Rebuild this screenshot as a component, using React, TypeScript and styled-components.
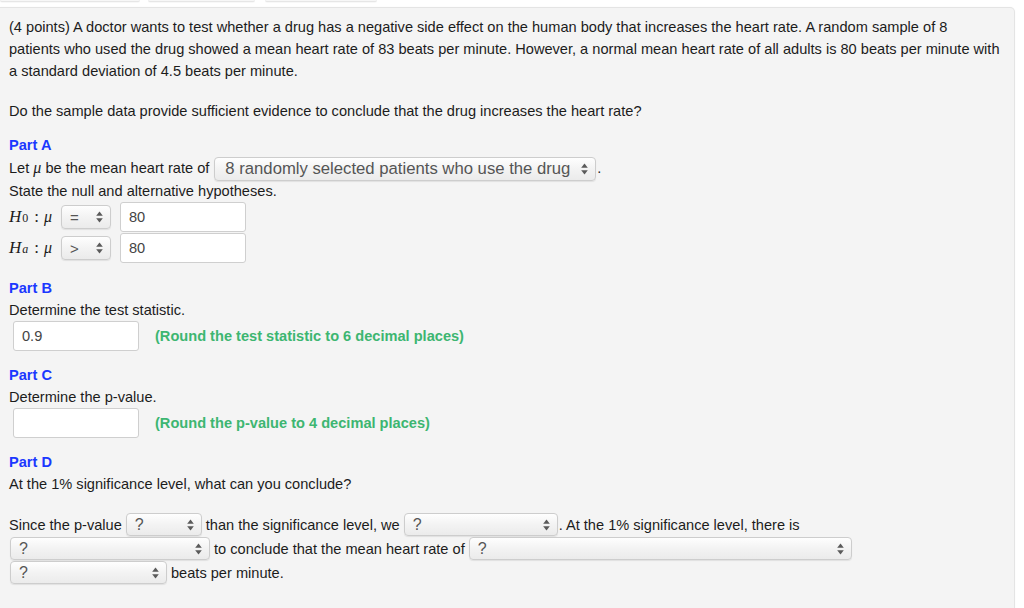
import React from 'react';
import styled, { createGlobalStyle } from 'styled-components';

const Global = createGlobalStyle`
  html, body { margin: 0; padding: 0; background: #ffffff; }
  body {
    font-family: "Liberation Sans", Arial, Helvetica, sans-serif;
    font-size: 14.6px;
    color: #1c1c1c;
  }
`;

const Page = styled.div`
  width: 1024px;
  height: 608px;
  overflow: hidden;
  background: #ffffff;
`;

const TabBar = styled.div`
  display: flex;
  height: 7px;
  align-items: flex-start;
`;

const Tab = styled.div<{ $w: number; $ml: number }>`
  width: ${p => p.$w}px;
  margin-left: ${p => p.$ml}px;
  height: 1px;
  background: #f7f7f7;
  border-bottom: 1px solid #e6e6e6;
  border-radius: 0 0 3px 3px;
  box-shadow: 0 1px 1px rgba(0, 0, 0, 0.03);
`;

const Panel = styled.div`
  box-sizing: border-box;
  width: 1015px;
  min-height: 640px;
  background: #f4f4f4;
  border: 1px solid #e4e4e4;
  border-left: none;
  border-radius: 0 5px 0 0;
  padding: 8px 10px 0 9px;
  box-shadow: 0 0 2px rgba(0, 0, 0, 0.04);
`;

const Para = styled.div<{ $mt?: number }>`
  line-height: 22px;
  margin-top: ${p => p.$mt ?? 0}px;
`;

const PartTitle = styled.div<{ $mt: number }>`
  margin-top: ${p => p.$mt}px;
  line-height: 22px;
  font-weight: bold;
  color: #1b38ff;
`;

const SelectLine = styled.div`
  line-height: 23.5px;
  height: 23.5px;
  white-space: nowrap;
`;

const MathVar = styled.span<{ $size?: number }>`
  font-family: "Liberation Serif", "Times New Roman", serif;
  font-style: italic;
  font-size: ${p => p.$size ?? 16}px;
`;

const MathSub = styled.sub`
  font-family: "Liberation Serif", "Times New Roman", serif;
  font-style: normal;
  font-size: 12px;
  vertical-align: -3px;
  margin-left: 1px;
`;

const MathColon = styled.span`
  font-family: "Liberation Serif", "Times New Roman", serif;
  font-size: 17px;
  margin: 0 5px 0 6px;
`;

const HypRow = styled.div`
  display: flex;
  align-items: center;
  height: 31px;
`;

const HypLabel = styled.span`
  display: inline-flex;
  align-items: baseline;
  width: 48px;
`;

const Box = styled.span<{ $w: number; $h: number; $fs: number; $pl: number }>`
  display: inline-flex;
  box-sizing: border-box;
  align-items: center;
  justify-content: space-between;
  vertical-align: middle;
  flex: none;
  width: ${p => p.$w}px;
  height: ${p => p.$h}px;
  padding: 0 7px 0 ${p => p.$pl}px;
  border: 1px solid #cdcdcd;
  border-radius: 4px;
  background: linear-gradient(#fefefe 0%, #f3f3f3 50%, #ebebeb 100%);
  box-shadow: 0 1px 1px rgba(0, 0, 0, 0.08);
  font-family: "Liberation Sans", Arial, Helvetica, sans-serif;
  font-size: ${p => p.$fs}px;
  color: #555555;
  line-height: 1;
  margin: 0 4px;
`;

const BoxText = styled.span`
  white-space: nowrap;
`;

const Arrows = () => (
  <svg width="7" height="12" viewBox="0 0 7 12">
    <polygon points="3.5,0.5 6.8,4.8 0.2,4.8" fill="#5a5a5a" />
    <polygon points="0.2,7.2 6.8,7.2 3.5,11.5" fill="#5a5a5a" />
  </svg>
);

const Dropdown = ({ w, h = 23, fs = 16, pl = 8, text, ml, mr }: { w: number; h?: number; fs?: number; pl?: number; text: string; ml?: number; mr?: number }) => (
  <Box $w={w} $h={h} $fs={fs} $pl={pl} style={ml !== undefined || mr !== undefined ? { marginLeft: ml, marginRight: mr } : undefined}>
    <BoxText>{text}</BoxText>
    <Arrows />
  </Box>
);

const Input = styled.div<{ $ml: number }>`
  box-sizing: border-box;
  width: 126px;
  height: 30px;
  margin-left: ${p => p.$ml}px;
  background: #ffffff;
  border: 1px solid #cfcfcf;
  border-radius: 3px;
  padding: 0 8px;
  display: flex;
  align-items: center;
  color: #444444;
  font-size: 14.6px;
`;

const AnswerRow = styled.div`
  display: flex;
  align-items: center;
  height: 30px;
`;

const Hint = styled.span`
  margin-left: 16px;
  font-weight: bold;
  color: #3db671;
`;

const Conclusion = styled.div`
  margin-top: 18px;
`;

const ConclusionLine = styled.div`
  display: flex;
  align-items: center;
  height: 24px;
  white-space: nowrap;
`;

export default function App() {
  return (
    <Page>
      <Global />
      <TabBar>
        <Tab $w={140} $ml={0} />
        <Tab $w={107} $ml={8} />
        <Tab $w={112} $ml={10} />
      </TabBar>
      <Panel>
        <Para>
          (4 points) A doctor wants to test whether a drug has a negative side effect on the human body that increases the heart rate. A random sample of 8
          <br />
          patients who used the drug showed a mean heart rate of 83 beats per minute. However, a normal mean heart rate of all adults is 80 beats per minute with a standard deviation of 4.5 beats per minute.
        </Para>
        <Para $mt={18}>Do the sample data provide sufficient evidence to conclude that the drug increases the heart rate?</Para>

        <PartTitle $mt={12}>Part A</PartTitle>
        <SelectLine>
          Let <MathVar>μ</MathVar> be the mean heart rate of
          <Dropdown w={382} h={24} fs={16.7} pl={10} text="8 randomly selected patients who use the drug" ml={5} mr={1} />.
        </SelectLine>
        <Para>State the null and alternative hypotheses.</Para>
        <HypRow>
          <HypLabel>
            <MathVar $size={17}>H</MathVar>
            <MathSub>0</MathSub>
            <MathColon>:</MathColon>
            <MathVar $size={16}>μ</MathVar>
          </HypLabel>
          <Dropdown w={50} h={24} fs={15} pl={8} text="=" />
          <Input $ml={5}>80</Input>
        </HypRow>
        <HypRow>
          <HypLabel>
            <MathVar $size={17}>H</MathVar>
            <MathSub><i>a</i></MathSub>
            <MathColon>:</MathColon>
            <MathVar $size={16}>μ</MathVar>
          </HypLabel>
          <Dropdown w={50} h={24} fs={15} pl={8} text=">" />
          <Input $ml={5}>80</Input>
        </HypRow>

        <PartTitle $mt={13}>Part B</PartTitle>
        <Para>Determine the test statistic.</Para>
        <AnswerRow>
          <Input $ml={4}>0.9</Input>
          <Hint>(Round the test statistic to 6 decimal places)</Hint>
        </AnswerRow>

        <PartTitle $mt={13}>Part C</PartTitle>
        <Para>Determine the p-value.</Para>
        <AnswerRow>
          <Input $ml={4}></Input>
          <Hint>(Round the p-value to 4 decimal places)</Hint>
        </AnswerRow>

        <PartTitle $mt={13}>Part D</PartTitle>
        <Para>At the 1% significance level, what can you conclude?</Para>
        <Conclusion>
          <ConclusionLine>
            <span>Since the p-value</span>
            <Dropdown w={76} text="?" />
            <span>than the significance level, we</span>
            <Dropdown w={154} text="?" mr={1} />
            <span>. At the 1% significance level, there is</span>
          </ConclusionLine>
          <ConclusionLine>
            <Dropdown w={200} text="?" ml={1} />
            <span>to conclude that the mean heart rate of</span>
            <Dropdown w={383} text="?" />
          </ConclusionLine>
          <ConclusionLine>
            <Dropdown w={157} text="?" ml={1} />
            <span>beats per minute.</span>
          </ConclusionLine>
        </Conclusion>
      </Panel>
    </Page>
  );
}
